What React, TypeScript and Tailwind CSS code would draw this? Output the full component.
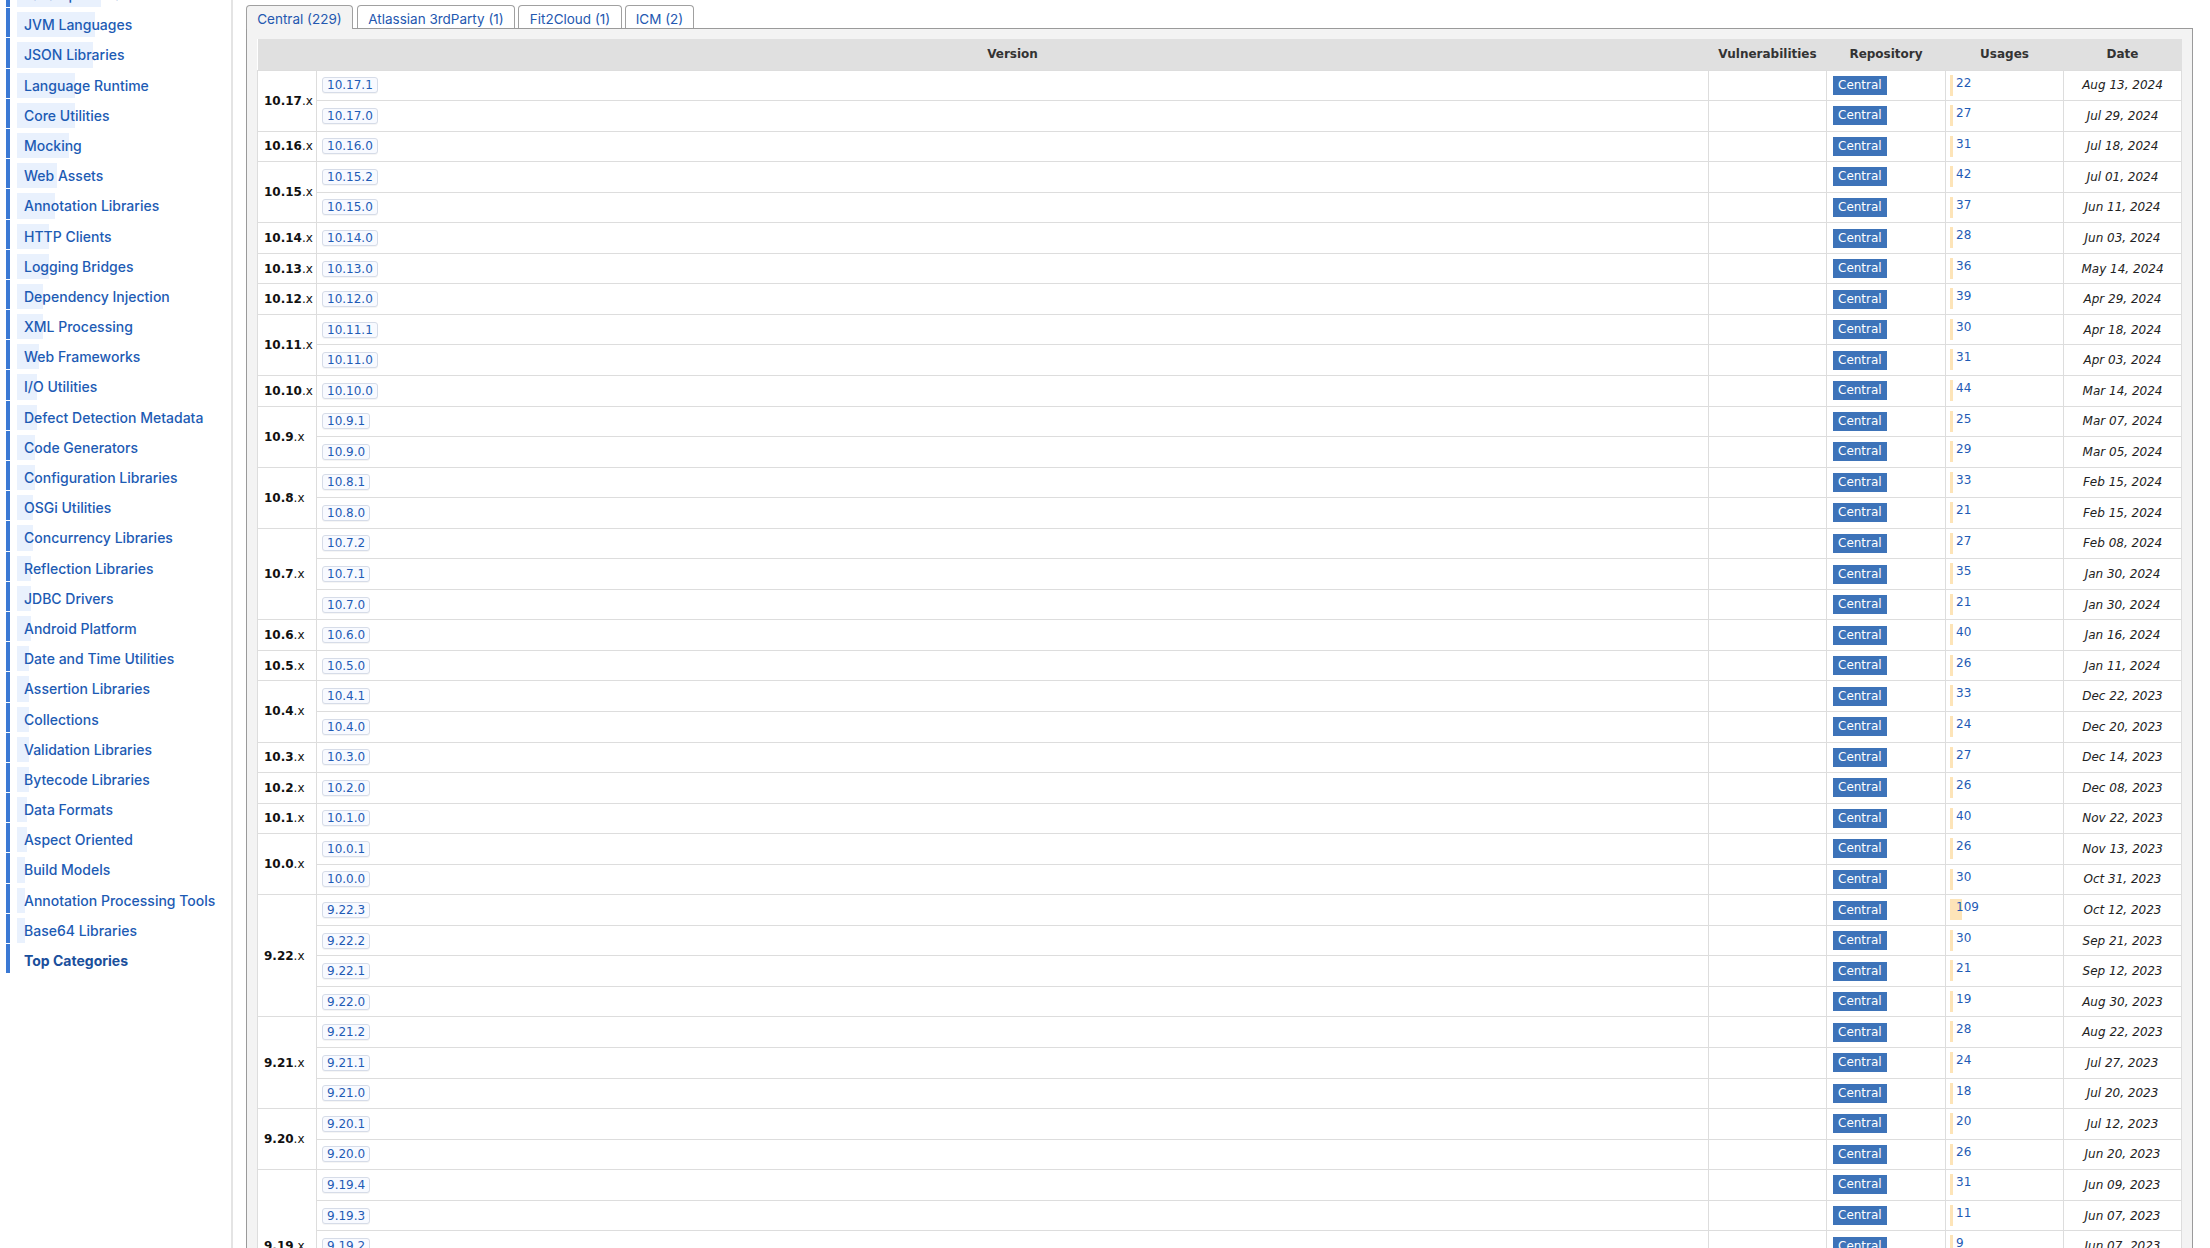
import React from "react";

const sidebar: [string, number][] = [
  ["Java Specifications", 84],
  ["JVM Languages", 78],
  ["JSON Libraries", 76],
  ["Language Runtime", 58],
  ["Core Utilities", 58],
  ["Mocking", 52],
  ["Web Assets", 40],
  ["Annotation Libraries", 38],
  ["HTTP Clients", 32],
  ["Logging Bridges", 32],
  ["Dependency Injection", 26],
  ["XML Processing", 26],
  ["Web Frameworks", 22],
  ["I/O Utilities", 20],
  ["Defect Detection Metadata", 20],
  ["Code Generators", 18],
  ["Configuration Libraries", 18],
  ["OSGi Utilities", 16],
  ["Concurrency Libraries", 16],
  ["Reflection Libraries", 14],
  ["JDBC Drivers", 14],
  ["Android Platform", 14],
  ["Date and Time Utilities", 12],
  ["Assertion Libraries", 12],
  ["Collections", 12],
  ["Validation Libraries", 12],
  ["Bytecode Libraries", 12],
  ["Data Formats", 10],
  ["Aspect Oriented", 10],
  ["Build Models", 8],
  ["Annotation Processing Tools", 8],
  ["Base64 Libraries", 8],
];

type Row = [string, number, string];
const groups: { label: string; rows: Row[] }[] = [
  { label: "10.17", rows: [["10.17.1", 22, "Aug 13, 2024"], ["10.17.0", 27, "Jul 29, 2024"]] },
  { label: "10.16", rows: [["10.16.0", 31, "Jul 18, 2024"]] },
  { label: "10.15", rows: [["10.15.2", 42, "Jul 01, 2024"], ["10.15.0", 37, "Jun 11, 2024"]] },
  { label: "10.14", rows: [["10.14.0", 28, "Jun 03, 2024"]] },
  { label: "10.13", rows: [["10.13.0", 36, "May 14, 2024"]] },
  { label: "10.12", rows: [["10.12.0", 39, "Apr 29, 2024"]] },
  { label: "10.11", rows: [["10.11.1", 30, "Apr 18, 2024"], ["10.11.0", 31, "Apr 03, 2024"]] },
  { label: "10.10", rows: [["10.10.0", 44, "Mar 14, 2024"]] },
  { label: "10.9", rows: [["10.9.1", 25, "Mar 07, 2024"], ["10.9.0", 29, "Mar 05, 2024"]] },
  { label: "10.8", rows: [["10.8.1", 33, "Feb 15, 2024"], ["10.8.0", 21, "Feb 15, 2024"]] },
  { label: "10.7", rows: [["10.7.2", 27, "Feb 08, 2024"], ["10.7.1", 35, "Jan 30, 2024"], ["10.7.0", 21, "Jan 30, 2024"]] },
  { label: "10.6", rows: [["10.6.0", 40, "Jan 16, 2024"]] },
  { label: "10.5", rows: [["10.5.0", 26, "Jan 11, 2024"]] },
  { label: "10.4", rows: [["10.4.1", 33, "Dec 22, 2023"], ["10.4.0", 24, "Dec 20, 2023"]] },
  { label: "10.3", rows: [["10.3.0", 27, "Dec 14, 2023"]] },
  { label: "10.2", rows: [["10.2.0", 26, "Dec 08, 2023"]] },
  { label: "10.1", rows: [["10.1.0", 40, "Nov 22, 2023"]] },
  { label: "10.0", rows: [["10.0.1", 26, "Nov 13, 2023"], ["10.0.0", 30, "Oct 31, 2023"]] },
  { label: "9.22", rows: [["9.22.3", 109, "Oct 12, 2023"], ["9.22.2", 30, "Sep 21, 2023"], ["9.22.1", 21, "Sep 12, 2023"], ["9.22.0", 19, "Aug 30, 2023"]] },
  { label: "9.21", rows: [["9.21.2", 28, "Aug 22, 2023"], ["9.21.1", 24, "Jul 27, 2023"], ["9.21.0", 18, "Jul 20, 2023"]] },
  { label: "9.20", rows: [["9.20.1", 20, "Jul 12, 2023"], ["9.20.0", 26, "Jun 20, 2023"]] },
  { label: "9.19", rows: [["9.19.4", 31, "Jun 09, 2023"], ["9.19.3", 11, "Jun 07, 2023"], ["9.19.2", 9, "Jun 07, 2023"], ["9.19.1", 14, "May 31, 2023"], ["9.19.0", 22, "May 25, 2023"]] },
];

const tabs: { name: string; w: string; active?: boolean; ml: string }[] = [
  { name: "Central (229)", w: "w-[107px]", active: true, ml: "ml-0" },
  { name: "Atlassian 3rdParty (1)", w: "w-[158px]", ml: "ml-[4px]" },
  { name: "Fit2Cloud (1)", w: "w-[104px]", ml: "ml-[3px]" },
  { name: "ICM (2)", w: "w-[69px]", ml: "ml-[3px]" },
];

function Sidebar() {
  return (
    <aside className="w-[233px] shrink-0 border-r-2 border-[#e4e4e4] font-['Inter',sans-serif]">
      <ul className="-mt-[22px] pl-[6px]">
        {sidebar.map(([name, w]) => (
          <li key={name} className="h-[29.2px] mb-px border-l-4 border-[#3b79d4] pl-[7px] pt-[4px]">
            <a className="relative block h-[25.2px] pt-px pl-[7px] leading-[24px] text-[14px] font-medium text-[#1d5bb4] whitespace-nowrap">
              <span className="absolute left-0 top-0 bottom-0 bg-[#e9f1fd]" style={{ width: w }} />
              <span className="relative">{name}</span>
            </a>
          </li>
        ))}
        <li className="h-[29.2px] mb-px border-l-4 border-[#3b79d4] pl-[7px] pt-[4px]">
          <a className="relative block h-[25.2px] pt-px pl-[7px] leading-[24px] text-[14px] font-bold text-[#1a4f9c] whitespace-nowrap">
            Top Categories
          </a>
        </li>
      </ul>
    </aside>
  );
}

function VersionTable() {
  return (
    <table className="w-full table-fixed border-collapse bg-white font-['DejaVu_Sans',Verdana,sans-serif] text-[12px] text-[#111]">
      <colgroup>
        <col className="w-[59px]" />
        <col />
        <col className="w-[118px]" />
        <col className="w-[119px]" />
        <col className="w-[118px]" />
        <col className="w-[118px]" />
      </colgroup>
      <thead>
        <tr className="h-[31px] bg-[#e0e0e0] text-[#333]">
          <th className="font-bold"></th>
          <th className="font-bold text-center">Version</th>
          <th className="font-bold text-center">Vulnerabilities</th>
          <th className="font-bold text-center">Repository</th>
          <th className="font-bold text-center">Usages</th>
          <th className="font-bold text-center">Date</th>
        </tr>
      </thead>
      <tbody>
        {groups.map((g) =>
          g.rows.map(([v, u, d], i) => (
            <tr key={v} className="h-[30.56px]">
              {i === 0 && (
                <td rowSpan={g.rows.length} className="border border-[#dddddd] pl-[6px] align-middle whitespace-nowrap">
                  <b className="font-bold">{g.label}</b>.x
                </td>
              )}
              <td className="border border-[#dddddd] pl-[5px] align-middle">
                <a className="inline-block rounded-[3px] border border-[#d6dce8] bg-[#f8faff] px-[4px] leading-[14px] text-[#1f5bb5] shadow-[0_1px_0_rgba(0,0,0,0.04)]">
                  {v}
                </a>
              </td>
              <td className="border border-[#dddddd]"></td>
              <td className="border border-[#dddddd] pl-[6px] align-middle">
                <span className="inline-block bg-[#3d73b9] px-[5px] leading-[19px] text-white">Central</span>
              </td>
              <td className="border border-[#dddddd] pl-[4px] pt-[4px] align-top">
                <div className="relative h-[21px]">
                  <div className="absolute left-0 top-0 h-[21px] bg-[#fde4b8]" style={{ width: u > 100 ? 12 : 3 }} />
                  <a className="relative block pl-[6px] leading-[16px] text-[#1f5bb5]">{u}</a>
                </div>
              </td>
              <td className="border border-[#dddddd] text-center italic text-[#222] align-middle">{d}</td>
            </tr>
          ))
        )}
      </tbody>
    </table>
  );
}

export default function App() {
  return (
    <div className="flex h-screen overflow-hidden bg-white">
      <Sidebar />
      <main className="flex-1 min-w-0 pl-[13px] pr-[17px] pt-[5px]">
        <div className="flex items-end h-[23px] font-['Inter',sans-serif] text-[13.5px]">
          {tabs.map((t) => (
            <div
              key={t.name}
              className={`${t.w} ${t.ml} shrink-0 rounded-t-[4px] border border-b-0 border-[#a0a0a0] pt-[5px] text-center leading-[17px] text-[#2458b0] whitespace-nowrap ${
                t.active ? "relative z-10 h-[24px] -mb-px bg-[#f3f3f3]" : "h-[23px] bg-white"
              }`}
            >
              {t.name}
            </div>
          ))}
        </div>
        <div className="border border-[#9a9a9a] bg-[#f3f3f3] px-[10px] pt-[10px]">
          <VersionTable />
        </div>
      </main>
    </div>
  );
}
